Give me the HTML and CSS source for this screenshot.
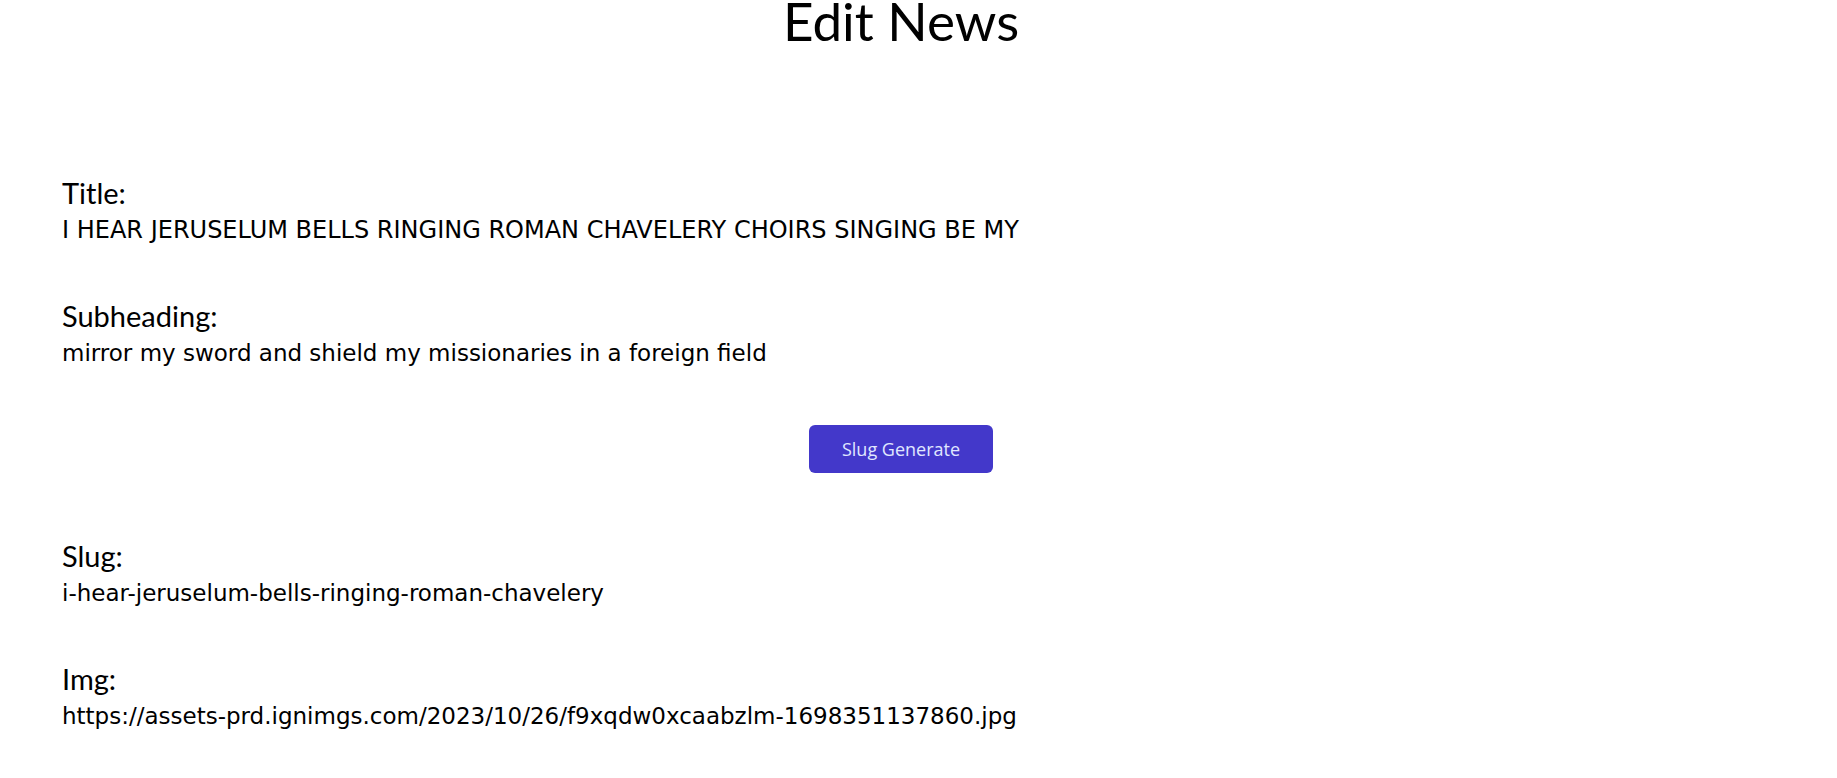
FILE: index.html
```html
<!DOCTYPE html>
<html lang="en">
<head>
<meta charset="utf-8">
<title>Edit News</title>
<link rel="stylesheet" href="styles.css">
</head>
<body>
<main class="page">
  <h1 class="page-title">Edit News</h1>
  <form class="news-form">
    <div class="field">
      <div class="field-label">Title:</div>
      <div class="field-value field-value-caps">I HEAR JERUSELUM BELLS RINGING ROMAN CHAVELERY CHOIRS SINGING BE MY</div>
    </div>
    <div class="field">
      <div class="field-label">Subheading:</div>
      <div class="field-value">mirror my sword and shield my missionaries in a foreign field</div>
    </div>
    <div class="actions">
      <button type="button" class="btn-primary">Slug Generate</button>
    </div>
    <div class="field">
      <div class="field-label">Slug:</div>
      <div class="field-value">i-hear-jeruselum-bells-ringing-roman-chavelery</div>
    </div>
    <div class="field">
      <div class="field-label">Img:</div>
      <div class="field-value">https://assets-prd.ignimgs.com/2023/10/26/f9xqdw0xcaabzlm-1698351137860.jpg</div>
    </div>
  </form>
</main>
</body>
</html>
```
FILE: styles.css
```css
html, body {
  margin: 0;
  padding: 0;
  background: #ffffff;
  color: #000000;
}

body {
  font-family: "Lato", "Open Sans", sans-serif;
}

.page {
  width: 1678px;
  padding-left: 62px;
}

.page-title {
  margin: 0;
  font-family: "Lato", "Open Sans", sans-serif;
  font-weight: 400;
  font-size: 53px;
  line-height: 41px;
  text-align: center;
}

.news-form {
  margin-top: 135px;
  display: flex;
  flex-direction: column;
}

.field {
  margin-bottom: 49px;
}

.field-label {
  font-family: "Lato", "Open Sans", sans-serif;
  font-size: 29px;
  line-height: 34px;
}

.field-value {
  font-family: "DejaVu Sans", sans-serif;
  font-size: 23px;
  line-height: 40px;
  white-space: nowrap;
}

.field-value-caps {
  font-size: 24px;
}

.actions {
  display: flex;
  justify-content: center;
  margin-top: 3px;
  margin-bottom: 66px;
}

.btn-primary {
  width: 184px;
  height: 48px;
  border: none;
  border-radius: 6px;
  background: #4338ca;
  color: #e0e7ff;
  font-family: "Open Sans", "Lato", sans-serif;
  font-size: 18px;
  cursor: pointer;
}
```
